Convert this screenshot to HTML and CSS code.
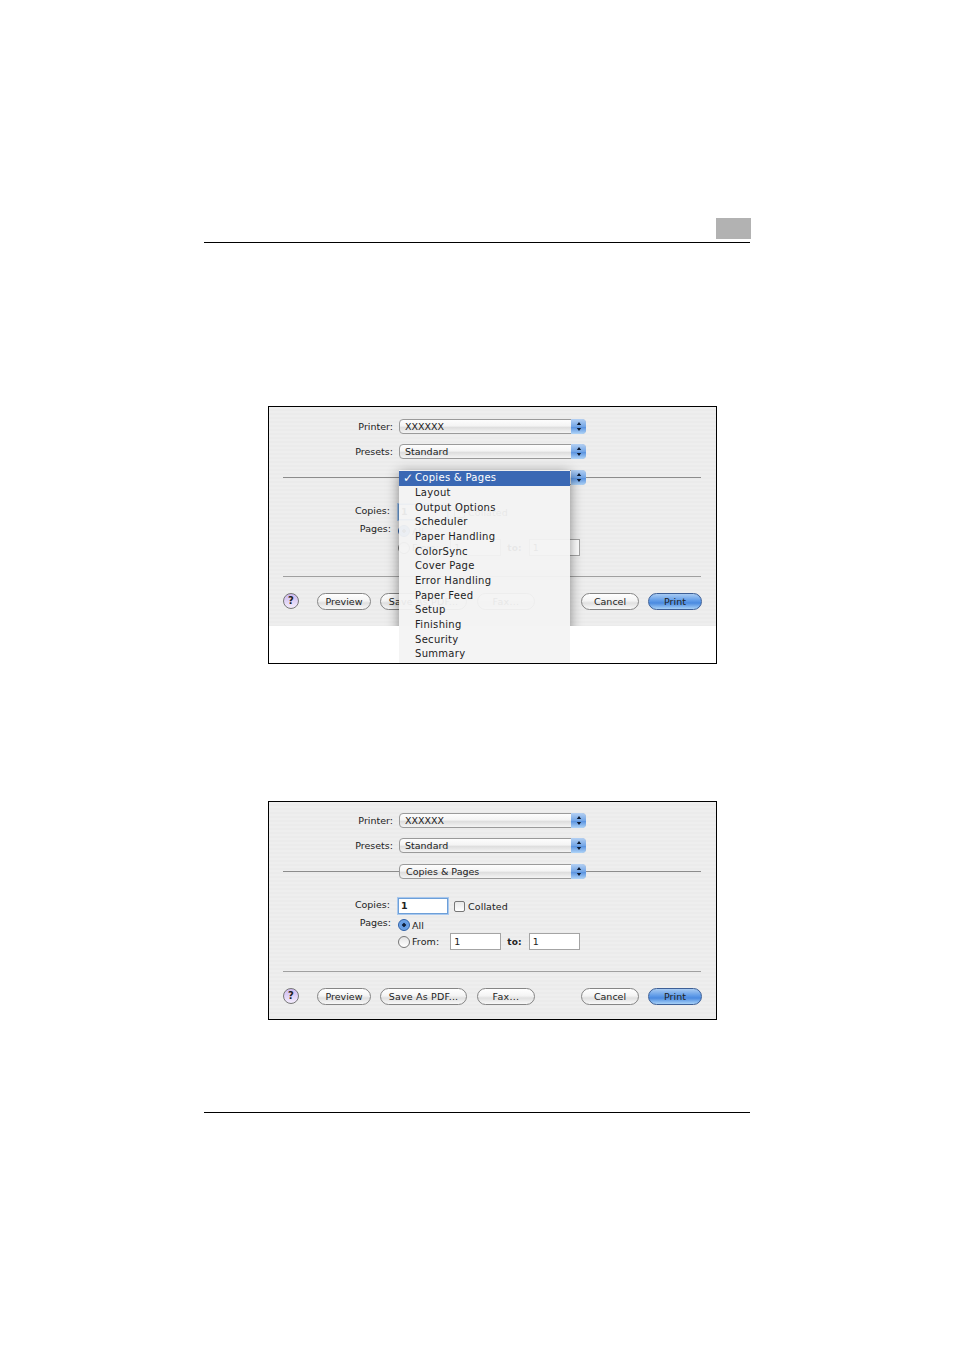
FILE: index.html
```html
<!DOCTYPE html>
<html lang="en">
<head>
    <meta charset="UTF-8">
    <title>Print dialog</title>
    <link rel="stylesheet" href="styles.css">
</head>
<body>
    <header class="page-head">
        <div class="chapter-tab"></div>
    </header>

    <!-- first figure: the pane menu is open -->
    <div class="figure figure-menu">
        <div class="dialog">
            <div class="row">
                <span class="label">Printer:</span>
                <div class="select"><span class="select-text">XXXXXX</span><span class="stepper"><svg width="6" height="11" viewBox="0 0 6 11"><path d="M3 1 L5.2 4 H0.8Z M3 10 L5.2 7 H0.8Z"/></svg></span></div>
            </div>
            <div class="row">
                <span class="label">Presets:</span>
                <div class="select"><span class="select-text">Standard</span><span class="stepper"><svg width="6" height="11" viewBox="0 0 6 11"><path d="M3 1 L5.2 4 H0.8Z M3 10 L5.2 7 H0.8Z"/></svg></span></div>
            </div>
            <div class="row row-pane">
                <span class="rule"></span>
                <div class="select"><span class="select-text">Copies &amp; Pages</span><span class="stepper"><svg width="6" height="11" viewBox="0 0 6 11"><path d="M3 1 L5.2 4 H0.8Z M3 10 L5.2 7 H0.8Z"/></svg></span></div>
                <span class="rule"></span>
            </div>
            <div class="row row-copies">
                <span class="label label-short">Copies:</span>
                <div class="field field-focus">1</div>
                <span class="checkbox"></span>
                <span class="option">Collated</span>
            </div>
            <div class="row row-all">
                <span class="label label-pages">Pages:</span>
                <span class="radio radio-on"></span>
                <span class="option option-strong">All</span>
            </div>
            <div class="row row-from">
                <span class="label label-short"></span>
                <span class="radio"></span>
                <span class="option">From:</span>
                <div class="field field-from">1</div>
                <span class="option option-to">to:</span>
                <div class="field field-to">1</div>
            </div>
            <hr class="divider">
            <div class="row row-buttons">
                <span class="help">?</span>
                <span class="btn btn-preview">Preview</span>
                <span class="btn btn-pdf">Save As PDF...</span>
                <span class="btn btn-fax">Fax...</span>
                <span class="spacer"></span>
                <span class="btn btn-cancel">Cancel</span>
                <span class="btn btn-print">Print</span>
            </div>
            <div class="menu-shadow"></div>
        </div>
        <ul class="menu">
            <li class="menu-item menu-current"><span class="check">✓</span>Copies &amp; Pages</li>
            <li class="menu-item">Layout</li>
            <li class="menu-item">Output Options</li>
            <li class="menu-item">Scheduler</li>
            <li class="menu-item">Paper Handling</li>
            <li class="menu-item">ColorSync</li>
            <li class="menu-item">Cover Page</li>
            <li class="menu-item">Error Handling</li>
            <li class="menu-item">Paper Feed</li>
            <li class="menu-item">Setup</li>
            <li class="menu-item">Finishing</li>
            <li class="menu-item">Security</li>
            <li class="menu-item">Summary</li>
        </ul>
    </div>

    <!-- second figure: the Copies & Pages pane -->
    <div class="figure figure-plain">
        <div class="dialog">
            <div class="row">
                <span class="label">Printer:</span>
                <div class="select"><span class="select-text">XXXXXX</span><span class="stepper"><svg width="6" height="11" viewBox="0 0 6 11"><path d="M3 1 L5.2 4 H0.8Z M3 10 L5.2 7 H0.8Z"/></svg></span></div>
            </div>
            <div class="row">
                <span class="label">Presets:</span>
                <div class="select"><span class="select-text">Standard</span><span class="stepper"><svg width="6" height="11" viewBox="0 0 6 11"><path d="M3 1 L5.2 4 H0.8Z M3 10 L5.2 7 H0.8Z"/></svg></span></div>
            </div>
            <div class="row row-pane">
                <span class="rule"></span>
                <div class="select"><span class="select-text">Copies &amp; Pages</span><span class="stepper"><svg width="6" height="11" viewBox="0 0 6 11"><path d="M3 1 L5.2 4 H0.8Z M3 10 L5.2 7 H0.8Z"/></svg></span></div>
                <span class="rule"></span>
            </div>
            <div class="row row-copies">
                <span class="label label-short">Copies:</span>
                <div class="field field-focus">1</div>
                <span class="checkbox"></span>
                <span class="option">Collated</span>
            </div>
            <div class="row row-all">
                <span class="label label-pages">Pages:</span>
                <span class="radio radio-on"></span>
                <span class="option option-strong">All</span>
            </div>
            <div class="row row-from">
                <span class="label label-short"></span>
                <span class="radio"></span>
                <span class="option">From:</span>
                <div class="field field-from">1</div>
                <span class="option option-to">to:</span>
                <div class="field field-to">1</div>
            </div>
            <hr class="divider">
            <div class="row row-buttons">
                <span class="help">?</span>
                <span class="btn btn-preview">Preview</span>
                <span class="btn btn-pdf">Save As PDF...</span>
                <span class="btn btn-fax">Fax...</span>
                <span class="spacer"></span>
                <span class="btn btn-cancel">Cancel</span>
                <span class="btn btn-print">Print</span>
            </div>
        </div>
    </div>

    <footer class="page-foot"></footer>
</body>
</html>
```

FILE: styles.css
```css
body {
    font-family: "DejaVu Sans", sans-serif;
    font-size: 9.5px;
    color: #222;
    background-color: #fff;
    margin: 0;
    padding: 218px 204px 0;
}
.page-head {
    display: flex;
    justify-content: flex-end;
    height: 24px;
    border-bottom: 1px solid #000;
}
.chapter-tab {
    width: 35px;
    height: 21px;
    margin-right: -1px;
    background-color: #b2b2b2;
}
.figure {
    position: relative;
    box-sizing: border-box;
    width: 449px;
    margin-left: 64px;
    border: 1px solid #000;
    background-color: #fff;
}
.figure-menu {
    height: 258px;
    margin-top: 163px;
}
.figure-plain {
    height: 219px;
    margin-top: 137px;
}
.dialog {
    position: relative;
    overflow: hidden;
    box-sizing: border-box;
    height: 219px;
    padding: 12px 15px 0 14px;
    background: repeating-linear-gradient(#eeeeee 0, #eeeeee 2px, #ebebeb 2px, #ebebeb 4px);
}
.figure-plain .dialog {
    height: 217px;
    padding-top: 11px;
}
.figure-menu .divider {
    margin-top: 20px;
}
.row {
    display: flex;
    align-items: center;
    height: 15px;
    margin-bottom: 10px;
}
.label {
    width: 110px;
    margin-right: 6px;
    text-align: right;
}
.label-short {
    width: 107px;
    margin-right: 8px;
    margin-bottom: 4px;
}
.label-pages {
    width: 108px;
    margin-right: 7px;
    margin-bottom: 6px;
}
.select {
    display: flex;
    box-sizing: border-box;
    width: 187px;
    height: 15px;
    border: 1px solid #9a9a9a;
    border-radius: 4px;
    background: linear-gradient(#fdfdfd, #f4f4f4 45%, #dedede 58%, #f4f4f4);
}
.select-text {
    flex: 1;
    padding-left: 5px;
    line-height: 14px;
}
.row-pane .select-text {
    padding-left: 6px;
}
.stepper {
    display: flex;
    align-items: center;
    justify-content: center;
    width: 15px;
    margin: -1px -1px -1px 0;
    border-radius: 0 4px 4px 0;
    background: linear-gradient(#b4d0f3, #74a6e6 50%, #5a93e0 55%, #b0d4f7);
}
.stepper path {
    fill: #0c1a30;
}
.row-pane {
    margin-bottom: 0;
    margin-top: 11px;
}
.rule {
    height: 1px;
    background-color: #8c8c8c;
}
.rule:first-child {
    width: 116px;
}
.rule:last-child {
    flex: 1;
}
.row-copies {
    height: 16px;
    margin-top: 19px;
    margin-bottom: 0;
}
.field {
    box-sizing: border-box;
    height: 17px;
    padding-left: 3px;
    border: 1px solid #a4a4a4;
    background-color: #fff;
    line-height: 15px;
}
.field-focus {
    width: 50px;
    height: 16px;
    padding-left: 2px;
    border-color: #6d9fd8;
    box-shadow: 0 0 0 1px #a8c8ee;
    line-height: 14px;
    font-weight: bold;
}
.checkbox {
    box-sizing: border-box;
    width: 11px;
    height: 11px;
    margin: 0 3px 0 6px;
    border: 1px solid #777;
    border-radius: 2px;
    background: linear-gradient(#e8e8e8, #fff);
}
.option {
    letter-spacing: 0.1px;
}
.row-all {
    height: 12px;
    margin-top: 5px;
    margin-bottom: 0;
}
.row-from {
    height: 17px;
    margin-top: 2px;
    margin-bottom: 0;
}
.radio {
    box-sizing: border-box;
    width: 12px;
    height: 12px;
    margin-right: 2px;
    border: 1px solid #777;
    border-radius: 50%;
    background: linear-gradient(#e4e4e4, #fff);
}
.radio-on {
    border-color: #2b5fa8;
    background: radial-gradient(circle, #10203a 0, #10203a 1.5px, #5f97e0 2px, #7fb0ea);
}
.field-from {
    width: 51px;
    margin-left: 11px;
}
.field-to {
    width: 51px;
    margin-left: 7px;
}
.option-to {
    margin-left: 6px;
    font-weight: bold;
    font-size: 9px;
}
.divider {
    height: 1px;
    margin: 21px 0 0;
    border: none;
    background-color: #a0a0a0;
}
.row-buttons {
    height: 17px;
    margin-top: 16px;
    margin-bottom: 0;
}
.help {
    box-sizing: border-box;
    width: 16px;
    height: 16px;
    margin-right: 18px;
    margin-bottom: 2px;
    border: 1px solid #777;
    border-radius: 50%;
    background: linear-gradient(#cdb9f0, #f3ecfc);
    font-size: 10px;
    font-weight: bold;
    line-height: 14px;
    text-align: center;
    color: #222;
}
.btn {
    box-sizing: border-box;
    height: 17px;
    border: 1px solid #858585;
    border-radius: 9px;
    background: linear-gradient(#fff, #f4f4f4 45%, #e0e0e0 60%, #f8f8f8);
    line-height: 15px;
    text-align: center;
}
.btn-preview {
    width: 54px;
    margin-right: 9px;
}
.btn-pdf {
    width: 87px;
    margin-right: 10px;
    letter-spacing: 0.2px;
}
.btn-fax {
    width: 58px;
    letter-spacing: 0.3px;
}
.spacer {
    flex: 1;
}
.btn-cancel {
    width: 58px;
    margin-right: 9px;
}
.btn-print {
    width: 54px;
    margin-right: -1px;
    border-color: #3d5f96;
    background: linear-gradient(#a8cbf2, #5f9be8 45%, #4a8ae0 60%, #a6d0f7);
}
.menu-shadow {
    position: absolute;
    top: 63px;
    left: 130px;
    width: 171px;
    height: 220px;
    box-shadow: 0 3px 12px rgba(0, 0, 0, 0.45);
}
.menu {
    position: absolute;
    top: 63px;
    left: 130px;
    box-sizing: border-box;
    width: 171px;
    height: 193px;
    margin: 0;
    padding: 1.3px 0 0;
    overflow: hidden;
    list-style: none;
    font-size: 10px;
    background-color: rgba(243, 243, 243, 0.94);
}
.menu-item {
    position: relative;
    height: 14.67px;
    padding-left: 16px;
    line-height: 14.67px;
    letter-spacing: 0.3px;
}
.menu-current {
    background-color: #3a68b4;
    color: #fff;
}
.check {
    position: absolute;
    left: 4px;
    font-size: 12px;
    font-weight: bold;
}
.page-foot {
    height: 0;
    margin-top: 92px;
    border-top: 1px solid #000;
}
```
